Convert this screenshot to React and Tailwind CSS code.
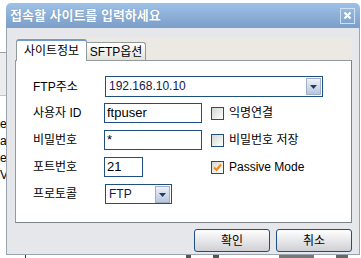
import React from 'react';

const font = "font-['Liberation_Sans','Noto_Sans_CJK_KR',sans-serif]";

const Arrow = () => (
  <svg width="7" height="4" viewBox="0 0 7 4">
    <polygon points="0,0 7,0 3.5,4" fill="#1c3c6c" />
  </svg>
);

const DropButton = () => (
  <div className="w-[15px] h-[17px] mt-[1px] mr-[1px] flex items-center justify-center border border-[#9fb0c8] bg-gradient-to-b from-[#eef2f8] to-[#b8c6dc]">
    <Arrow />
  </div>
);

const Combo = ({ value, className }) => (
  <div className={`flex justify-between border border-[#1f4f7e] bg-white ${className}`}>
    <span className="pl-[3px] text-[12px] leading-[19px] text-[#10204a]">{value}</span>
    <DropButton />
  </div>
);

const Input = ({ value, className }) => (
  <div className={`h-[20px] border border-[#1f4f7e] bg-white pl-[2px] text-[13px] leading-[18px] text-black ${className}`}>
    {value}
  </div>
);

const Check = ({ checked, label }) => (
  <div className="flex items-center ml-[9px]">
    <div className="w-[13px] h-[13px] border border-[#1f4f7e] bg-gradient-to-br from-[#d6d6d0] to-white flex items-center justify-center">
      {checked && (
        <svg width="11" height="11" viewBox="0 0 11 11">
          <path d="M2 5.5 L4.5 8 L9 2.5" stroke="#ec8a1e" strokeWidth="2" fill="none" />
        </svg>
      )}
    </div>
    <span className="ml-[5px] text-[12px] text-black">{label}</span>
  </div>
);

const Label = ({ children }) => (
  <div className="w-[71px] shrink-0 text-[12px] text-black">{children}</div>
);

export default function App() {
  return (
    <div className={`w-[361px] h-[258px] bg-white overflow-hidden flex flex-col ${font}`}>
      <div className="flex h-[255px]">
        {/* background app strip */}
        <div className="w-[6px] shrink-0 overflow-hidden flex flex-col">
          <div className="h-[52px]" />
          <div className="h-[1px] bg-[#9aa0a8]" />
          <div className="h-[42px] bg-[#ececec]" />
          <div className="h-[1px] bg-[#c4c4c4]" />
          <div className="pt-[20px] text-[12px] leading-[17px] text-black whitespace-nowrap">
            <div>er</div>
            <div>a</div>
            <div>e</div>
            <div>V</div>
          </div>
        </div>

        {/* dialog */}
        <div className="pt-[3px]">
          <div className="w-[354px] h-[252px] flex flex-col">
            <div className="h-[25px] rounded-t-[5px] bg-gradient-to-b from-[#9ec1e8] to-[#7a9ec8] flex items-center justify-between pl-[4px] pr-[5px]">
              <span className="text-[13px] font-bold text-white [text-shadow:0_0_1px_#5c7ea8]">접속할 사이트를 입력하세요</span>
              <div className="w-[15px] h-[16px] border border-[#d2e1f2] flex items-center justify-center">
                <svg width="9" height="9" viewBox="0 0 9 9">
                  <path d="M1.5 1.5 L7.5 7.5 M7.5 1.5 L1.5 7.5" stroke="white" strokeWidth="2.2" />
                </svg>
              </div>
            </div>

            <div className="flex-1 flex flex-col bg-[#e6e7eb] border-x border-b border-[#9aa4b0] pt-[9px]">
              <div className="ml-[8px] w-[337px] bg-[#ece9e5] pt-[2px]">
                {/* tabs */}
                <div className="flex items-end h-[21px] pl-[1px] relative z-10">
                  <div className="w-[71px] h-[22px] -mb-[1px] bg-white border border-b-0 border-[#919b9c] border-t-2 border-t-[#7299cc] rounded-t-[3px] flex items-center justify-center text-[12px] text-black">
                    사이트정보
                  </div>
                  <div className="w-[59px] h-[18px] bg-gradient-to-b from-white to-[#e2e2dc] border border-b-0 border-l-0 border-[#919b9c] rounded-tr-[3px] flex items-center justify-center text-[12px] text-black">
                    SFTP옵션
                  </div>
                </div>

                {/* panel */}
                <div className="h-[163px] bg-white border border-[#919b9c] border-r-[#7c8288] border-b-[#7c8288] pt-[15px] pl-[17px] flex flex-col">
                  <div className="flex items-center h-[21px]">
                    <Label>FTP주소</Label>
                    <Combo value="192.168.10.10" className="ml-[1px] w-[218px] h-[21px]" />
                  </div>
                  <div className="flex items-center h-[20px] mt-[6px]">
                    <Label>사용자 ID</Label>
                    <Input value="ftpuser" className="w-[98px]" />
                    <Check label="익명연결" />
                  </div>
                  <div className="flex items-center h-[20px] mt-[7px]">
                    <Label>비밀번호</Label>
                    <Input value="*" className="w-[98px]" />
                    <Check label="비밀번호 저장" />
                  </div>
                  <div className="flex items-center h-[20px] mt-[7px]">
                    <Label>포트번호</Label>
                    <Input value="21" className="w-[39px]" />
                    <div className="w-[59px]" />
                    <Check checked label="Passive Mode" />
                  </div>
                  <div className="flex items-center h-[20px] mt-[7px]">
                    <Label>프로토콜</Label>
                    <Combo value="FTP" className="ml-[1px] w-[67px] h-[20px]" />
                  </div>
                </div>
              </div>

              {/* buttons */}
              <div className="flex justify-end gap-[6px] pr-[7px] mt-[6px]">
                <button className="w-[76px] h-[23px] rounded-[3px] border border-[#1f4f7e] bg-gradient-to-b from-white to-[#cfd0d6] text-[12px] text-black">확인</button>
                <button className="w-[76px] h-[23px] rounded-[3px] border border-[#1f4f7e] bg-gradient-to-b from-white to-[#cfd0d6] text-[12px] text-black">취소</button>
              </div>
            </div>
          </div>
        </div>
      </div>

      {/* background app bottom strip */}
      <div className="h-[3px] flex">
        <div className="ml-[25px] w-[1px] bg-[#333]" />
        <div className="ml-[160px] w-[5px] bg-[#555]" />
        <div className="ml-[22px] w-[6px] bg-[#555]" />
        <div className="ml-[60px] w-[35px] bg-[#777]" />
        <div className="ml-[22px] w-[12px] bg-[#666]" />
      </div>
    </div>
  );
}
